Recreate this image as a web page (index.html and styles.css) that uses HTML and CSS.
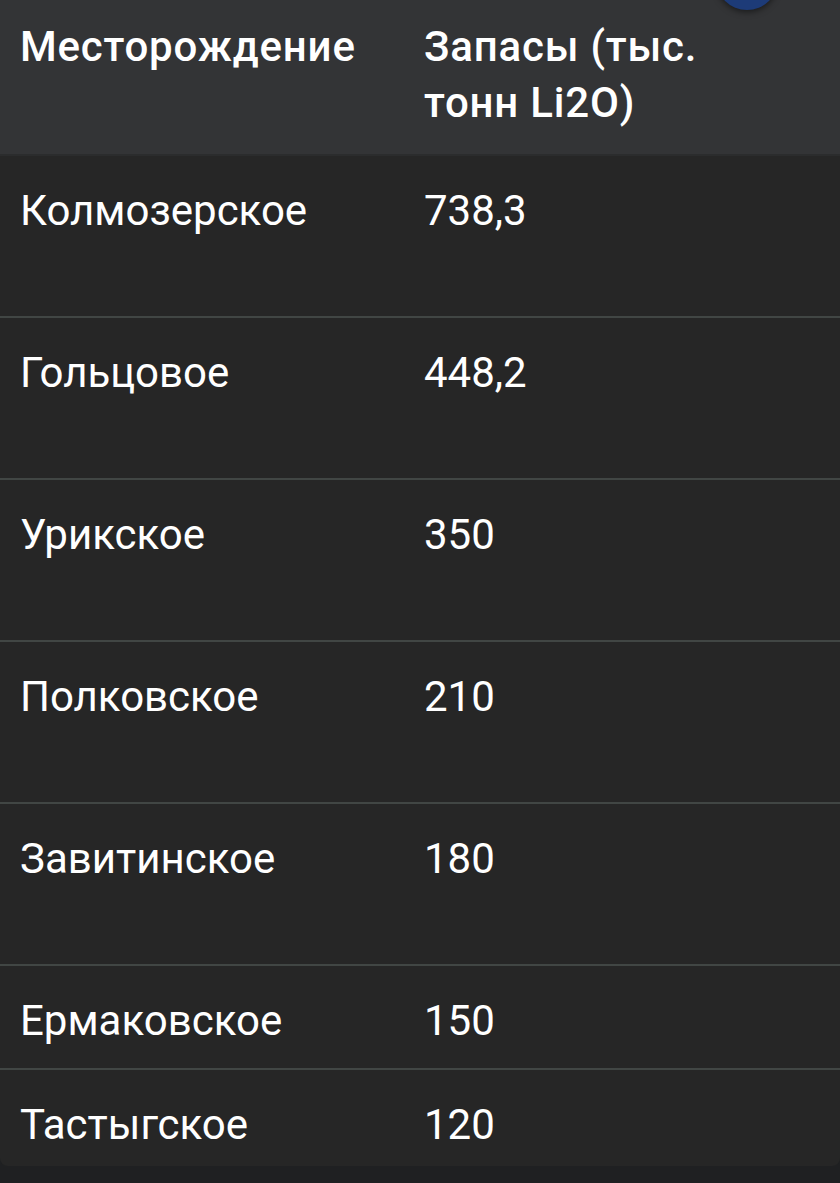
FILE: index.html
```html
<!DOCTYPE html>
<html lang="ru">
<head>
<meta charset="utf-8">
<link rel="stylesheet" href="styles.css">
</head>
<body>
<div class="page">
  <div class="fab"></div>
  <div class="table">
    <div class="row head">
      <div class="cell">Месторождение</div>
      <div class="cell">Запасы (тыс.<br>тонн Li2O)</div>
    </div>
    <div class="row tall">
      <div class="cell">Колмозерское</div>
      <div class="cell">738,3</div>
    </div>
    <div class="row tall">
      <div class="cell">Гольцовое</div>
      <div class="cell">448,2</div>
    </div>
    <div class="row tall">
      <div class="cell">Урикское</div>
      <div class="cell">350</div>
    </div>
    <div class="row tall">
      <div class="cell">Полковское</div>
      <div class="cell">210</div>
    </div>
    <div class="row tall">
      <div class="cell">Завитинское</div>
      <div class="cell">180</div>
    </div>
    <div class="row">
      <div class="cell">Ермаковское</div>
      <div class="cell">150</div>
    </div>
    <div class="row last">
      <div class="cell">Тастыгское</div>
      <div class="cell">120</div>
    </div>
  </div>
</div>
</body>
</html>
```
FILE: styles.css
```css
html, body {
  margin: 0;
  padding: 0;
  background: #1f2022;
}
.page {
  position: relative;
  width: 840px;
  height: 1183px;
  overflow: hidden;
  font-family: Roboto, "Noto Sans", sans-serif;
  color: #ffffff;
}
.fab {
  position: absolute;
  left: 716px;
  top: -52px;
  width: 62px;
  height: 62px;
  border-radius: 50%;
  background: #1d3b78;
  box-shadow: 0 2px 6px rgba(0,0,0,0.5);
}
.table {
  background: #262626;
  border-radius: 0 0 8px 8px;
  overflow: hidden;
}
.row {
  display: grid;
  grid-template-columns: 424px 1fr;
  border-bottom: 2px solid #414644;
  box-sizing: border-box;
  min-height: 104px;
}
.row.tall {
  min-height: 162px;
}
.row.last {
  border-bottom: none;
  min-height: 96px;
}
.row.head {
  background: #333436;
  min-height: 156px;
  border-bottom: 2px solid #2b2c2d;
}
.cell {
  font-size: 42px;
  line-height: 56px;
  padding: 27px 0 0 20px;
}
.cell + .cell {
  padding-left: 0;
}
.head .cell {
  font-weight: 500;
  letter-spacing: 0.8px;
  padding-top: 19px;
}
```
